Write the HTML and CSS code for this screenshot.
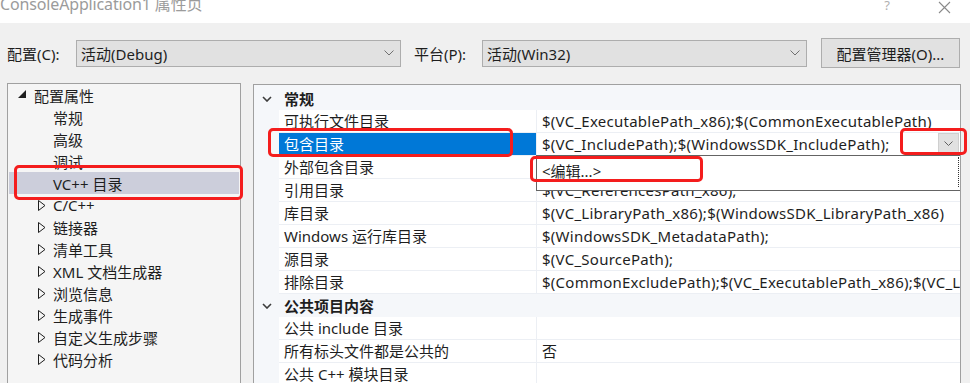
FILE: index.html
```html
<!DOCTYPE html>
<html lang="zh-CN">
<head>
    <meta charset="UTF-8">
    <title>ConsoleApplication1 属性页</title>
    <link rel="stylesheet" href="styles.css">
</head>
<body>
    <div class="titlebar">
        <span class="title">ConsoleApplication1 属性页</span>
        <span class="tb-help">?</span>
        <span class="tb-close">
            <svg width="13" height="13" viewBox="0 0 13 13"><path d="M1 1L12 12M12 1L1 12" stroke="#8a8a8a" stroke-width="1.1" fill="none"/></svg>
        </span>
    </div>

    <div class="toolbar">
        <label class="tool-label">配置(C):</label>
        <div class="combo">
            <span>活动(Debug)</span>
            <svg class="combo-arrow" width="10" height="6" viewBox="0 0 10 6"><path d="M0.5 0.5L5 5L9.5 0.5" stroke="#707070" fill="none"/></svg>
        </div>
        <label class="tool-label second">平台(P):</label>
        <div class="combo">
            <span>活动(Win32)</span>
            <svg class="combo-arrow" width="10" height="6" viewBox="0 0 10 6"><path d="M0.5 0.5L5 5L9.5 0.5" stroke="#707070" fill="none"/></svg>
        </div>
        <button class="manager">配置管理器(O)...</button>
    </div>

    <div class="main">
        <div class="tree">
            <div class="node root">
                <svg class="tri" width="8" height="8" viewBox="0 0 8 8"><path d="M0 8H8V0Z" fill="#1e1e1e"/></svg>
                <span>配置属性</span>
            </div>
            <div class="node leaf">常规</div>
            <div class="node leaf">高级</div>
            <div class="node leaf">调试</div>
            <div class="node leaf selected">VC++ 目录</div>
            <div class="node branch"><svg class="tri" width="8" height="11" viewBox="0 0 8 11"><path d="M0.5 0.5L7 5.5L0.5 10.5Z" stroke="#1e1e1e" fill="none"/></svg><span>C/C++</span></div>
            <div class="node branch"><svg class="tri" width="8" height="11" viewBox="0 0 8 11"><path d="M0.5 0.5L7 5.5L0.5 10.5Z" stroke="#1e1e1e" fill="none"/></svg><span>链接器</span></div>
            <div class="node branch"><svg class="tri" width="8" height="11" viewBox="0 0 8 11"><path d="M0.5 0.5L7 5.5L0.5 10.5Z" stroke="#1e1e1e" fill="none"/></svg><span>清单工具</span></div>
            <div class="node branch"><svg class="tri" width="8" height="11" viewBox="0 0 8 11"><path d="M0.5 0.5L7 5.5L0.5 10.5Z" stroke="#1e1e1e" fill="none"/></svg><span>XML 文档生成器</span></div>
            <div class="node branch"><svg class="tri" width="8" height="11" viewBox="0 0 8 11"><path d="M0.5 0.5L7 5.5L0.5 10.5Z" stroke="#1e1e1e" fill="none"/></svg><span>浏览信息</span></div>
            <div class="node branch"><svg class="tri" width="8" height="11" viewBox="0 0 8 11"><path d="M0.5 0.5L7 5.5L0.5 10.5Z" stroke="#1e1e1e" fill="none"/></svg><span>生成事件</span></div>
            <div class="node branch"><svg class="tri" width="8" height="11" viewBox="0 0 8 11"><path d="M0.5 0.5L7 5.5L0.5 10.5Z" stroke="#1e1e1e" fill="none"/></svg><span>自定义生成步骤</span></div>
            <div class="node branch"><svg class="tri" width="8" height="11" viewBox="0 0 8 11"><path d="M0.5 0.5L7 5.5L0.5 10.5Z" stroke="#1e1e1e" fill="none"/></svg><span>代码分析</span></div>
        </div>

        <div class="grid">
            <div class="cat">
                <svg class="chev" width="10" height="6" viewBox="0 0 10 6"><path d="M1 1L5 5L9 1" stroke="#3c3c3c" stroke-width="1.6" fill="none"/></svg>
                <span>常规</span>
            </div>
            <div class="prop"><span class="gut"></span><span class="name">可执行文件目录</span><span class="val">$(VC_ExecutablePath_x86);$(CommonExecutablePath)</span></div>
            <div class="prop">
                <span class="gut"></span>
                <span class="name active">包含目录</span>
                <span class="val">$(VC_IncludePath);$(WindowsSDK_IncludePath);
                    <span class="drop-btn"><svg width="9" height="5" viewBox="0 0 9 5"><path d="M0.5 0.5L4.5 4.5L8.5 0.5" stroke="#606060" fill="none"/></svg></span>
                </span>
            </div>
            <div class="prop"><span class="gut"></span><span class="name">外部包含目录</span><span class="val"></span></div>
            <div class="prop"><span class="gut"></span><span class="name">引用目录</span><span class="val">$(VC_ReferencesPath_x86);</span></div>
            <div class="prop"><span class="gut"></span><span class="name">库目录</span><span class="val">$(VC_LibraryPath_x86);$(WindowsSDK_LibraryPath_x86)</span></div>
            <div class="prop"><span class="gut"></span><span class="name">Windows 运行库目录</span><span class="val">$(WindowsSDK_MetadataPath);</span></div>
            <div class="prop"><span class="gut"></span><span class="name">源目录</span><span class="val">$(VC_SourcePath);</span></div>
            <div class="prop"><span class="gut"></span><span class="name">排除目录</span><span class="val">$(CommonExcludePath);$(VC_ExecutablePath_x86);$(VC_LibraryPath_x86)</span></div>
            <div class="cat">
                <svg class="chev" width="10" height="6" viewBox="0 0 10 6"><path d="M1 1L5 5L9 1" stroke="#3c3c3c" stroke-width="1.6" fill="none"/></svg>
                <span>公共项目内容</span>
            </div>
            <div class="prop"><span class="gut"></span><span class="name">公共 include 目录</span><span class="val"></span></div>
            <div class="prop"><span class="gut"></span><span class="name">所有标头文件都是公共的</span><span class="val">否</span></div>
            <div class="prop"><span class="gut"></span><span class="name">公共 C++ 模块目录</span><span class="val"></span></div>

            <div class="popup">
                <div class="popup-item">&lt;编辑...&gt;</div>
            </div>
        </div>
    </div>

    <!-- annotation boxes drawn over the screenshot -->
    <div class="mark mark-tree"></div>
    <div class="mark mark-name"></div>
    <div class="mark mark-btn"></div>
    <div class="mark mark-edit"></div>
</body>
</html>
```

FILE: styles.css
```css
body {
    margin: 0;
    background-color: #f0f0f0;
    font-family: "Noto Sans", "Noto Sans CJK SC", sans-serif;
    font-size: 14px;
    color: #1e1e1e;
    overflow: hidden;
    height: 383px;
    position: relative;
}
.titlebar {
    height: 23px;
    background: white;
    display: flex;
    align-items: flex-start;
    overflow: hidden;
}
.title {
    margin-top: -7px;
    font-size: 16px;
    line-height: 22px;
    color: #9b9b9b;
    flex: 1;
    letter-spacing: -0.15px;
}
.tb-help {
    color: #b0b0b0;
    font-size: 13px;
    line-height: 14px;
    margin-top: -2px;
    margin-right: 48px;
}
.tb-close {
    margin-right: 19px;
    margin-top: -1px;
}
.toolbar {
    height: 60px;
    display: flex;
    align-items: center;
    padding-left: 7px;
}
.tool-label {
    width: 69px;
    font-size: 15px;
    flex-shrink: 0;
}
.tool-label.second {
    margin-left: 13px;
    width: 68px;
}
.combo {
    width: 325px;
    height: 27px;
    border: 1px solid #adadad;
    background-color: #e1e1e1;
    display: flex;
    align-items: center;
    padding-left: 4px;
    box-sizing: border-box;
    font-size: 15px;
    flex-shrink: 0;
}
.combo span {
    flex: 1;
}
.combo-arrow {
    margin-right: 6px;
}
.manager {
    margin-left: 14px;
    width: 139px;
    height: 30px;
    border: 1px solid #adadad;
    background-color: #e1e1e1;
    font-family: inherit;
    font-size: 15px;
    color: #1e1e1e;
    padding: 0;
    flex-shrink: 0;
}
.main {
    display: flex;
    padding-left: 7px;
    align-items: flex-start;
}
.tree {
    width: 232px;
    height: 300px;
    border: 1px solid #a0a0a0;
    background-color: #f5f5f5;
}
.node {
    height: 22px;
    display: flex;
    align-items: center;
    font-size: 15px;
    margin: 0 1px;
}
.node.root {
    padding-left: 9px;
}
.node.root .tri {
    margin-right: 8px;
    margin-top: -3px;
}
.node.leaf {
    padding-left: 44px;
}
.node.branch {
    padding-left: 29px;
}
.node.branch .tri {
    margin-right: 7px;
}
.node.selected {
    background-color: #cccedb;
}
.grid {
    margin-left: 12px;
    margin-top: 1px;
    width: 706px;
    height: 300px;
    padding-top: 2px;
    border: 1px solid #a0a0a0;
    background-color: #f5f7fa;
    position: relative;
    overflow: hidden;
}
.cat {
    height: 23px;
    display: flex;
    align-items: center;
    font-weight: bold;
    font-size: 15px;
}
.chev {
    margin-left: 8px;
    margin-right: 12px;
}
.prop {
    display: grid;
    grid-template-columns: 25px 258px 1fr;
    height: 23px;
}
.name, .val {
    background: white;
    border-bottom: 1px solid #eceff4;
    padding-left: 5px;
    font-size: 15px;
    line-height: 22px;
    white-space: nowrap;
    overflow: hidden;
}
.name {
    border-right: 1px solid #eceff4;
}
.name.active {
    background-color: #0078d7;
    color: white;
}
.val {
    position: relative;
    letter-spacing: 0.25px;
}
.drop-btn {
    position: absolute;
    right: 1px;
    top: 0;
    width: 19px;
    height: 19px;
    border: 1px solid #cfcfcf;
    background-color: #e1e1e1;
    display: flex;
    align-items: center;
    justify-content: center;
}
.popup {
    position: absolute;
    left: 282px;
    top: 70px;
    width: 421px;
    height: 32px;
    border: 1px solid #646464;
    background: white;
    padding: 1px;
}
.popup-item {
    height: 30px;
    border-right: 1px dotted #333;
    padding-left: 4px;
    line-height: 28px;
    font-size: 15px;
}
.mark {
    position: absolute;
    border: 3px solid #f41d1d;
    border-radius: 5px;
    box-sizing: border-box;
}
.mark-tree {
    left: 14px;
    top: 165px;
    width: 229px;
    height: 35px;
}
.mark-name {
    left: 268px;
    top: 128px;
    width: 245px;
    height: 29px;
}
.mark-btn {
    left: 900px;
    top: 128px;
    width: 67px;
    height: 27px;
}
.mark-edit {
    left: 530px;
    top: 156px;
    width: 173px;
    height: 26px;
}
```
